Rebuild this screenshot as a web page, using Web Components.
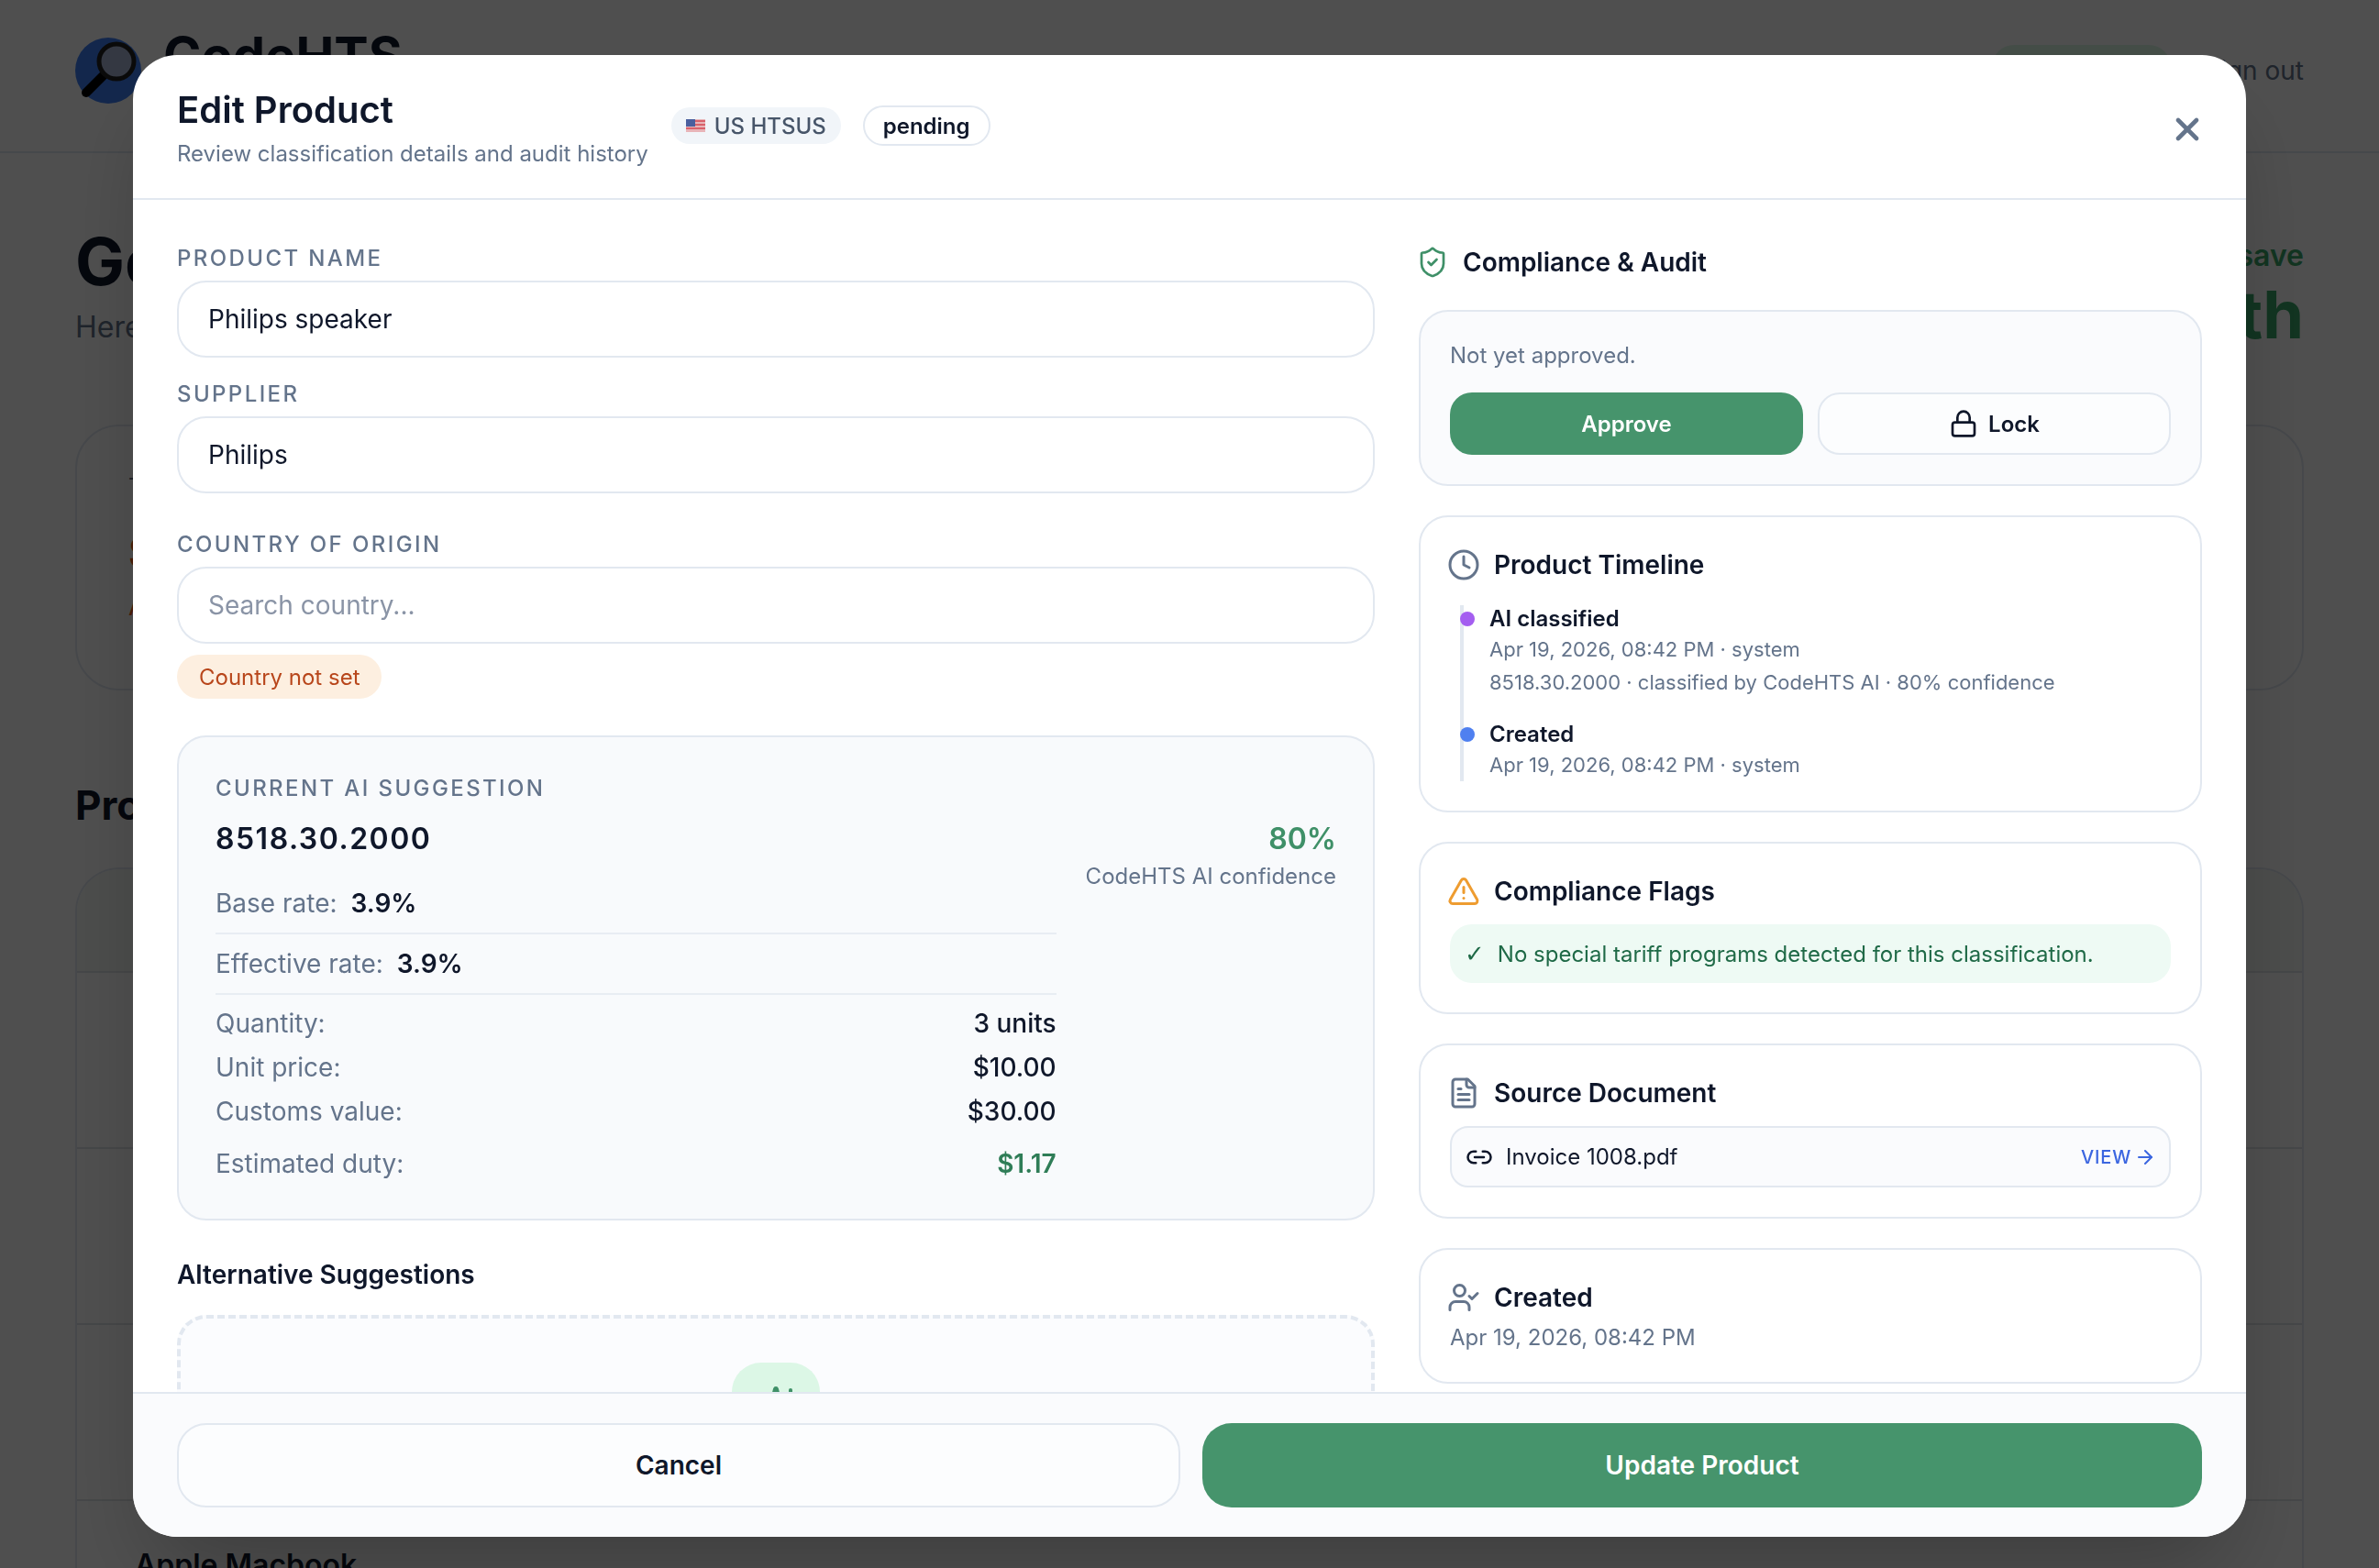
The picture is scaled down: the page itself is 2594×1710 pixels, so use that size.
<!DOCTYPE html>
<html lang="en">
<head>
<meta charset="utf-8">
<title>CodeHTS</title>
<style>
	html, body { margin: 0; height: 100%; overflow: hidden; background: #fff; }
	body { font-family: Inter, "Liberation Sans", sans-serif; color: #0f172a; }
</style>
</head>
<body>
<dash-page>
	<dash-nav></dash-nav>
	<dash-greeting></dash-greeting>
	<dash-summary></dash-summary>
	<product-table>
		<product-row></product-row>
		<product-row></product-row>
		<product-row></product-row>
		<product-row name="Apple Macbook"></product-row>
	</product-table>
</dash-page>

<edit-modal>
	<modal-header slot="header"></modal-header>

	<div slot="left">
		<form-field label="Product Name"><text-box>Philips speaker</text-box></form-field>
		<form-field label="Supplier" style="margin-top:24px"><text-box>Philips</text-box></form-field>
		<form-field label="Country of Origin" style="margin-top:40px"><text-box placeholder>Search country...</text-box></form-field>
		<warn-badge>Country not set</warn-badge>
		<ai-suggestion></ai-suggestion>
		<alt-suggestions></alt-suggestions>
	</div>

	<div slot="right">
		<section-title icon="shield" color="#3f9068">Compliance &amp; Audit</section-title>
		<side-card tint>
			<approve-panel></approve-panel>
		</side-card>
		<side-card>
			<section-title icon="clock" color="#64748b" gap="24">Product Timeline</section-title>
			<time-line>
				<time-item dot="#a45ef0" heading="AI classified">
					<div>Apr 19, 2026, 08:42 PM · system</div>
					<div style="margin-top:4px">8518.30.2000 · classified by CodeHTS AI · 80% confidence</div>
				</time-item>
				<time-item dot="#4f80f0" heading="Created">
					<div>Apr 19, 2026, 08:42 PM · system</div>
				</time-item>
			</time-line>
		</side-card>
		<side-card>
			<section-title icon="alert" color="#ee9c30" gap="16">Compliance Flags</section-title>
			<flag-note>No special tariff programs detected for this classification.</flag-note>
		</side-card>
		<side-card>
			<section-title icon="file" color="#64748b" gap="16">Source Document</section-title>
			<doc-link>Invoice 1008.pdf</doc-link>
		</side-card>
		<side-card>
			<section-title icon="user" color="#64748b" gap="8">Created</section-title>
			<div style="font-size:24px;line-height:32px;color:#64748b">Apr 19, 2026, 08:42 PM</div>
		</side-card>
	</div>

	<modal-footer slot="footer"></modal-footer>
</edit-modal>

<script>
// lucide style paths, 24 unit box
const ICONS = {
	shield: '<path d="M20 13c0 5-3.5 7.5-7.66 8.95a1 1 0 0 1-.67-.01C7.5 20.5 4 18 4 13V6a1 1 0 0 1 1-1c2 0 4.5-1.2 6.24-2.72a1.17 1.17 0 0 1 1.52 0C14.51 3.81 17 5 19 5a1 1 0 0 1 1 1z"/><path d="m9 12 2 2 4-4"/>',
	clock: '<circle cx="12" cy="12" r="10"/><polyline points="12 6 12 12 16 14"/>',
	alert: '<path d="m21.73 18-8-14a2 2 0 0 0-3.48 0l-8 14A2 2 0 0 0 4 21h16a2 2 0 0 0 1.73-3"/><path d="M12 9v4"/><path d="M12 17h.01"/>',
	file: '<path d="M15 2H6a2 2 0 0 0-2 2v16a2 2 0 0 0 2 2h12a2 2 0 0 0 2-2V7Z"/><path d="M14 2v4a2 2 0 0 0 2 2h4"/><path d="M10 9H8"/><path d="M16 13H8"/><path d="M16 17H8"/>',
	user: '<path d="M16 21v-2a4 4 0 0 0-4-4H6a4 4 0 0 0-4 4v2"/><circle cx="9" cy="7" r="4"/><polyline points="16 11 18 13 22 9"/>',
	lock: '<rect x="3" y="11" width="18" height="11" rx="2"/><path d="M7 11V7a5 5 0 0 1 10 0v4"/>',
	link: '<path d="M9 17H7A5 5 0 0 1 7 7h2"/><path d="M15 7h2a5 5 0 1 1 0 10h-2"/><line x1="8" y1="12" x2="16" y2="12"/>',
	arrow: '<path d="M5 12h14"/><path d="m12 5 7 7-7 7"/>',
	close: '<path d="M18 6 6 18"/><path d="m6 6 12 12"/>',
	sparkles: '<path d="M9.937 15.5A2 2 0 0 0 8.5 14.063l-6.135-1.582a.5.5 0 0 1 0-.962L8.5 9.936A2 2 0 0 0 9.937 8.5l1.582-6.135a.5.5 0 0 1 .963 0L14.063 8.5A2 2 0 0 0 15.5 9.937l6.135 1.581a.5.5 0 0 1 0 .964L15.5 14.063a2 2 0 0 0-1.437 1.437l-1.582 6.135a.5.5 0 0 1-.963 0z"/><path d="M20 3v4"/><path d="M22 5h-4"/><path d="M4 17v2"/><path d="M5 18H3"/>'
};

const icon = (name, size, color, width = 2) =>
	`<svg width="${size}" height="${size}" viewBox="0 0 24 24" fill="none" stroke="${color}" stroke-width="${width}" stroke-linecap="round" stroke-linejoin="round" style="flex:none;display:block">${ICONS[name]}</svg>`;

// small base class, every element just returns its shadow html
class Shadowed extends HTMLElement {
	connectedCallback() {
		if (this.shadowRoot) return;
		this.attachShadow({ mode: 'open' });
		this.shadowRoot.innerHTML = this.render();
	}
}

/* ---------- page behind the dialog ---------- */

customElements.define('dash-page', class extends Shadowed {
	render() {
		return `<style>:host { display: block; height: 1710px; overflow: hidden; }</style><slot></slot>`;
	}
});

customElements.define('dash-nav', class extends Shadowed {
	render() {
		return `<style>
			:host { display: flex; justify-content: space-between; padding: 41px 82px 0; border-bottom: 2px solid #e2e8f0; height: 124px; }
			.brand { display: flex; gap: 24px; }
			.name { font-size: 56px; line-height: 64px; font-weight: 700; margin-top: -12px; }
			.right { display: flex; align-items: center; gap: 36px; height: 72px; }
			.pill { width: 195px; height: 56px; border-radius: 24px; background: #dcf7e6; }
			.out { font-size: 28px; color: #64748b; }
		</style>
		<div class="brand">
			<svg width="72" height="72" viewBox="0 0 72 72">
				<circle cx="36" cy="36" r="36" fill="#3f7ff5"/>
				<path d="M30 42 L12 60" stroke="#000" stroke-width="10" stroke-linecap="round"/>
				<circle cx="45" cy="26" r="19" fill="#a9b4d6" stroke="#222" stroke-width="5"/>
			</svg>
			<div class="name">CodeHTS</div>
		</div>
		<div class="right"><div class="pill"></div><div class="out">Sign out</div></div>`;
	}
});

customElements.define('dash-greeting', class extends Shadowed {
	render() {
		return `<style>
			:host { display: flex; justify-content: space-between; padding: 78px 82px 0; }
			h1 { margin: 0; font-size: 72px; line-height: 80px; font-weight: 700; }
			p { margin: 12px 0 0; font-size: 32px; line-height: 40px; color: #64748b; }
			.right { text-align: right; color: #3aa86a; padding-top: 14px; }
			.save { font-size: 32px; line-height: 40px; font-weight: 600; }
			.big { font-size: 72px; line-height: 80px; font-weight: 700; margin-top: 4px; }
		</style>
		<div><h1>Good morning</h1><p>Here's your overview</p></div>
		<div class="right"><div class="save">You could save</div><div class="big">this month</div></div>`;
	}
});

customElements.define('dash-summary', class extends Shadowed {
	render() {
		return `<style>
			:host { display: block; margin: 80px 82px 0; height: 290px; box-sizing: border-box; padding: 50px 56px; border: 2px solid #e2e8f0; border-radius: 48px; }
			.t { font-size: 24px; line-height: 32px; color: #64748b; }
			.s { font-size: 48px; line-height: 60px; font-weight: 700; color: #f05a1a; margin-top: 26px; }
			.a { font-size: 28px; line-height: 40px; color: #f05a1a; margin-top: 8px; }
		</style>
		<div class="t">Tariff exposure</div><div class="s">Section 301</div><div class="a">Action needed</div>`;
	}
});

customElements.define('product-table', class extends Shadowed {
	render() {
		return `<style>
			:host { display: block; margin: 0 82px; }
			h2 { margin: 97px 0 40px; font-size: 44px; line-height: 56px; font-weight: 700; }
			.card { border: 2px solid #e2e8f0; border-bottom: 0; border-radius: 48px 48px 0 0; }
			.head { height: 111px; background: #f4f7f5; border-radius: 46px 46px 0 0; }
		</style>
		<h2>Products</h2>
		<div class="card"><div class="head"></div><slot></slot></div>`;
	}
});

customElements.define('product-row', class extends Shadowed {
	render() {
		return `<style>
			:host { display: block; height: 192px; box-sizing: border-box; border-top: 2px solid #dfe3e8; padding: 50px 63px 0; font-size: 32px; line-height: 40px; font-weight: 600; }
		</style>${this.getAttribute('name') || ''}`;
	}
});

/* ---------- dialog ---------- */

customElements.define('edit-modal', class extends Shadowed {
	render() {
		return `<style>
			:host { position: fixed; inset: 0; display: flex; justify-content: center; align-items: flex-start; padding-top: 60px; background: rgba(0, 0, 0, .69); box-sizing: border-box; }
			.dialog { width: 2304px; height: 1616px; display: flex; flex-direction: column; background: #fff; border-radius: 48px; overflow: hidden; box-shadow: 0 50px 100px -24px rgba(0, 0, 0, .25); }
			.body { flex: 1; min-height: 0; overflow: hidden; display: grid; grid-template-columns: 1306px 854px; gap: 48px; padding: 48px 48px 0; }
		</style>
		<div class="dialog">
			<slot name="header"></slot>
			<div class="body"><slot name="left"></slot><slot name="right"></slot></div>
			<slot name="footer"></slot>
		</div>`;
	}
});

customElements.define('modal-header', class extends Shadowed {
	render() {
		return `<style>
			:host { display: flex; align-items: center; gap: 26px; height: 156px; flex: none; padding: 0 48px; border-bottom: 2px solid #e2e8f0; }
			h2 { margin: 2px 0 0; font-size: 40px; line-height: 52px; font-weight: 600; }
			p { margin: 6px 0 0; font-size: 24px; line-height: 32px; color: #64748b; }
			.badge { display: flex; align-items: center; gap: 10px; height: 40px; margin: -2px 0 0 -1px; padding: 0 16px; border-radius: 20px; background: #f1f5f9; color: #475569; font-size: 24px; font-weight: 500; }
			.state { height: 44px; box-sizing: border-box; display: flex; align-items: center; margin: -2px 0 0 -2px; padding: 0 20px; border: 2px solid #e2e8f0; border-radius: 22px; font-size: 24px; font-weight: 600; }
			.close { margin: 6px -4px 0 auto; }
		</style>
		<div><h2>Edit Product</h2><p>Review classification details and audit history</p></div>
		<div class="badge">
			<svg width="21" height="14" viewBox="0 0 21 14"><rect width="21" height="14" fill="#e8b4b8"/><path d="M0 2h21M0 6h21M0 10h21" stroke="#d9616b" stroke-width="2"/><rect width="10" height="8" fill="#4a5f9e"/></svg>
			US HTSUS
		</div>
		<div class="state">pending</div>
		<div class="close">${icon('close', 40, '#64748b', 2.8)}</div>`;
	}
});

customElements.define('form-field', class extends Shadowed {
	render() {
		return `<style>
			:host { display: block; }
			label { display: block; margin-bottom: 8px; font-size: 24px; line-height: 32px; font-weight: 500; letter-spacing: 2.4px; text-transform: uppercase; color: #64748b; }
		</style>
		<label>${this.getAttribute('label')}</label><slot></slot>`;
	}
});

customElements.define('text-box', class extends Shadowed {
	render() {
		const color = this.hasAttribute('placeholder') ? '#8a94a6' : '#0f172a';
		return `<style>
			:host { display: flex; align-items: center; height: 84px; box-sizing: border-box; padding: 0 32px; border: 2px solid #e2e8f0; border-radius: 32px; font-size: 28px; color: ${color}; background: #fff; }
		</style><slot></slot>`;
	}
});

customElements.define('warn-badge', class extends Shadowed {
	render() {
		return `<style>
			:host { display: inline-flex; align-items: center; height: 48px; margin-top: 12px; padding: 0 24px; border-radius: 24px; background: #fdefe0; color: #b8461b; font-size: 24px; }
		</style><slot></slot>`;
	}
});

customElements.define('stat-row', class extends Shadowed {
	render() {
		const color = this.getAttribute('color') || '#0f172a';
		const line = this.hasAttribute('line');
		return `<style>
			:host { display: flex; align-items: center; font-size: 28px; color: #64748b; ${line ? 'height: 64px; gap: 15px; border-bottom: 2px solid #e8edf3;' : 'height: 48px; justify-content: space-between;'} }
			b { font-weight: 600; color: ${color}; }
			b.m { font-weight: 500; }
		</style>
		<span>${this.getAttribute('label')}</span><b class="${this.hasAttribute('medium') ? 'm' : ''}">${this.getAttribute('value')}</b>`;
	}
});

customElements.define('ai-suggestion', class extends Shadowed {
	render() {
		return `<style>
			:host { display: block; margin-top: 40px; height: 529px; box-sizing: border-box; padding: 40px; background: #f8fafc; border: 2px solid #e2e8f0; border-radius: 32px; }
			.cap { font-size: 24px; line-height: 32px; font-weight: 500; letter-spacing: 2.4px; color: #64748b; }
			.row { display: flex; gap: 32px; margin-top: 17px; }
			.left { flex: 1; }
			.code { font-size: 32px; line-height: 44px; font-weight: 600; letter-spacing: 1.5px; margin-bottom: 16px; }
			.right { text-align: right; }
			.pct { font-size: 32px; line-height: 44px; font-weight: 600; color: #3f9068; }
			.who { margin-top: 2px; font-size: 24px; line-height: 34px; color: #64748b; white-space: nowrap; }
			.vals { padding-top: 7px; }
		</style>
		<div class="cap">CURRENT AI SUGGESTION</div>
		<div class="row">
			<div class="left">
				<div class="code">8518.30.2000</div>
				<stat-row line label="Base rate:" value="3.9%"></stat-row>
				<stat-row line label="Effective rate:" value="3.9%"></stat-row>
				<div class="vals">
					<stat-row medium label="Quantity:" value="3 units"></stat-row>
					<stat-row medium label="Unit price:" value="$10.00"></stat-row>
					<stat-row medium label="Customs value:" value="$30.00"></stat-row>
					<stat-row style="margin-top:9px" color="#2f7d57" label="Estimated duty:" value="$1.17"></stat-row>
				</div>
			</div>
			<div class="right">
				<div class="pct">80%</div>
				<div class="who">CodeHTS AI confidence</div>
			</div>
		</div>`;
	}
});

customElements.define('alt-suggestions', class extends Shadowed {
	render() {
		return `<style>
			:host { display: block; margin-top: 41px; }
			h3 { margin: 0 0 26px; font-size: 28px; line-height: 36px; font-weight: 600; }
			.box { height: 300px; box-sizing: border-box; padding-top: 48px; background: #fbfcfe; border: 4px dashed #e2e8f0; border-radius: 32px; }
			.ico { width: 96px; height: 96px; margin: 0 auto; display: flex; align-items: center; justify-content: center; border-radius: 32px; background: #dcf7e6; }
		</style>
		<h3>Alternative Suggestions</h3>
		<div class="box"><div class="ico">${icon('sparkles', 48, '#3f9068')}</div></div>`;
	}
});

customElements.define('section-title', class extends Shadowed {
	render() {
		const gap = this.getAttribute('gap') || 32;
		return `<style>
			:host { display: flex; align-items: center; height: 40px; margin: 0 0 ${gap}px; gap: 15px; font-size: 28px; font-weight: 600; color: #0f172a; }
			svg { margin-left: -3px; }
		</style>${icon(this.getAttribute('icon'), 36, this.getAttribute('color'), this.getAttribute('icon') === 'shield' ? 1.8 : 2)}<slot></slot>`;
	}
});

customElements.define('side-card', class extends Shadowed {
	render() {
		return `<style>
			:host { display: block; margin-bottom: 32px; box-sizing: border-box; padding: 32px; border: 2px solid #e2e8f0; border-radius: 32px; background: ${this.hasAttribute('tint') ? '#fafbfd' : '#fff'}; }
		</style><slot></slot>`;
	}
});

customElements.define('approve-panel', class extends Shadowed {
	render() {
		return `<style>
			:host { display: block; }
			p { margin: 0 0 24px; font-size: 24px; line-height: 32px; color: #64748b; }
			.btns { display: grid; grid-template-columns: 1fr 1fr; gap: 16px; }
			.btn { height: 68px; box-sizing: border-box; display: flex; align-items: center; justify-content: center; border-radius: 24px; font-size: 24px; font-weight: 600; }
			.go { background: #46946c; color: #fff; }
			.lock { gap: 11px; border: 2px solid #e2e8f0; background: #fcfdfe; color: #0f172a; }
		</style>
		<p>Not yet approved.</p>
		<div class="btns"><div class="btn go">Approve</div><div class="btn lock">${icon('lock', 32, '#0f172a')}Lock</div></div>`;
	}
});

customElements.define('time-line', class extends Shadowed {
	render() {
		return `<style>
			:host { display: block; margin-left: 11px; padding: 0 0 2px 28px; border-left: 4px solid #e2e8f0; }
			::slotted(*:not(:last-child)) { margin-bottom: 26px; }
		</style><slot></slot>`;
	}
});

customElements.define('time-item', class extends Shadowed {
	render() {
		return `<style>
			:host { display: block; position: relative; font-size: 22px; line-height: 32px; color: #64748b; }
			.dot { position: absolute; left: -32px; top: 7px; width: 16px; height: 16px; border-radius: 50%; background: ${this.getAttribute('dot')}; }
			.h { font-size: 24px; line-height: 30px; font-weight: 600; color: #0f172a; margin-bottom: 2px; }
		</style>
		<div class="dot"></div><div class="h">${this.getAttribute('heading')}</div><slot></slot>`;
	}
});

customElements.define('flag-note', class extends Shadowed {
	render() {
		return `<style>
			:host { display: flex; align-items: center; gap: 14px; height: 64px; padding: 0 16px; border-radius: 24px; background: #eefaf4; color: #1f6a47; font-size: 24px; }
			span { font-family: "DejaVu Sans", sans-serif; font-size: 26px; }
		</style><span>✓</span><slot></slot>`;
	}
});

customElements.define('doc-link', class extends Shadowed {
	render() {
		return `<style>
			:host { display: flex; align-items: center; height: 67px; box-sizing: border-box; padding: 0 14px 0 15px; gap: 14px; border: 2px solid #e2e8f0; border-radius: 20px; background: #fafbfd; font-size: 24px; color: #0f172a; }
			.view { margin-left: auto; display: flex; align-items: center; gap: 3px; font-size: 20px; font-weight: 500; letter-spacing: .8px; color: #3b66e0; }
		</style>
		${icon('link', 30, '#0f172a')}<slot></slot>
		<div class="view">VIEW ${icon('arrow', 24, '#3b66e0')}</div>`;
	}
});

customElements.define('modal-footer', class extends Shadowed {
	render() {
		return `<style>
			:host { display: flex; gap: 24px; flex: none; padding: 32px 48px; background: #fafbfd; border-top: 2px solid #e2e8f0; }
			.btn { flex: 1; height: 92px; box-sizing: border-box; display: flex; align-items: center; justify-content: center; border-radius: 32px; font-size: 28px; font-weight: 600; }
			.cancel { border: 2px solid #e2e8f0; color: #0f172a; background: #fcfdfe; }
			.save { background: #46946c; color: #fff; }
		</style>
		<div class="btn cancel">Cancel</div><div class="btn save">Update Product</div>`;
	}
});
</script>
</body>
</html>
